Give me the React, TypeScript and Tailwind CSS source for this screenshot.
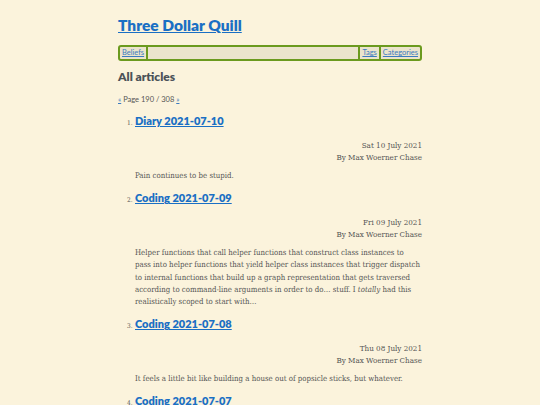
const articles = [
  {
    title: 'Diary 2021-07-10',
    date: 'Sat 10 July 2021',
    body: <>Pain continues to be stupid.</>,
  },
  {
    title: 'Coding 2021-07-09',
    date: 'Fri 09 July 2021',
    body: (
      <>
        Helper functions that call helper functions that construct class instances to
        <br />
        pass into helper functions that yield helper class instances that trigger dispatch
        <br />
        to internal functions that build up a graph representation that gets traversed
        <br />
        according to command-line arguments in order to do… stuff. I <em>totally</em> had this
        <br />
        realistically scoped to start with…
      </>
    ),
  },
  {
    title: 'Coding 2021-07-08',
    date: 'Thu 08 July 2021',
    body: <>It feels a little bit like building a house out of popsicle sticks, but whatever.</>,
  },
  {
    title: 'Coding 2021-07-07',
    date: 'Wed 07 July 2021',
    body: <>Nothing much today.</>,
  },
];

const sans = "font-['Lato',sans-serif]";
const serif = "font-['DejaVu_Serif',serif] font-stretch-condensed";

export default function App() {
  return (
    <div className="min-h-[405px] bg-[#fbf3dc]">
      <div className="mx-auto w-[304px] pt-[14px]">
        <h1 className={`${sans} text-[15.5px] font-extrabold leading-[22px]`}>
          <a href="#" className="text-[#1a6fc4] underline">Three Dollar Quill</a>
        </h1>

        {/* Nav bar */}
        <nav className={`${sans} mt-[9px] flex h-[16px] items-stretch rounded-[3px] border-2 border-[#6b9a1e] bg-[#ebe4cc] text-[7.5px] leading-[12px]`}>
          <a href="#" className="border-r-2 border-[#6b9a1e] px-[2px] text-[#3b7bc0] underline">Beliefs</a>
          <div className="flex-1" />
          <a href="#" className="border-l-2 border-[#6b9a1e] px-[2px] text-[#3b7bc0] underline">Tags</a>
          <a href="#" className="border-l-2 border-[#6b9a1e] px-[2px] text-[#3b7bc0] underline">Categories</a>
        </nav>

        <h2 className={`${sans} mt-[8px] text-[12px] font-extrabold leading-[16px] text-[#4b5258]`}>All articles</h2>

        <p className={`${sans} mt-[10px] text-[7.5px] leading-[10px] text-[#555]`}>
          <a href="#" className="text-[#3b7bc0] underline">«</a> Page 190 / 308{' '}
          <a href="#" className="text-[#3b7bc0] underline">»</a>
        </p>

        <ol className="mt-[7px] pl-[17px]">
          {articles.map((a, i) => (
            <li key={a.title} className="mb-[7px]">
              <div className="flex items-baseline">
                <span className={`${serif} -ml-[8px] w-[8px] text-[6.5px] text-[#555]`}>{i + 1}.</span>
                <a href="#" className={`${sans} text-[11px] font-extrabold leading-[17px] text-[#1a6fc4] underline`}>
                  {a.title}
                </a>
              </div>
              <div className={`${serif} mt-[11px] text-right text-[8px] leading-[12px] text-[#555]`}>
                <div>{a.date}</div>
                <div>By Max Woerner Chase</div>
              </div>
              <p className={`${serif} mt-[6px] text-[7.8px] leading-[12.2px] text-[#555]`}>{a.body}</p>
            </li>
          ))}
        </ol>
      </div>
    </div>
  );
}
